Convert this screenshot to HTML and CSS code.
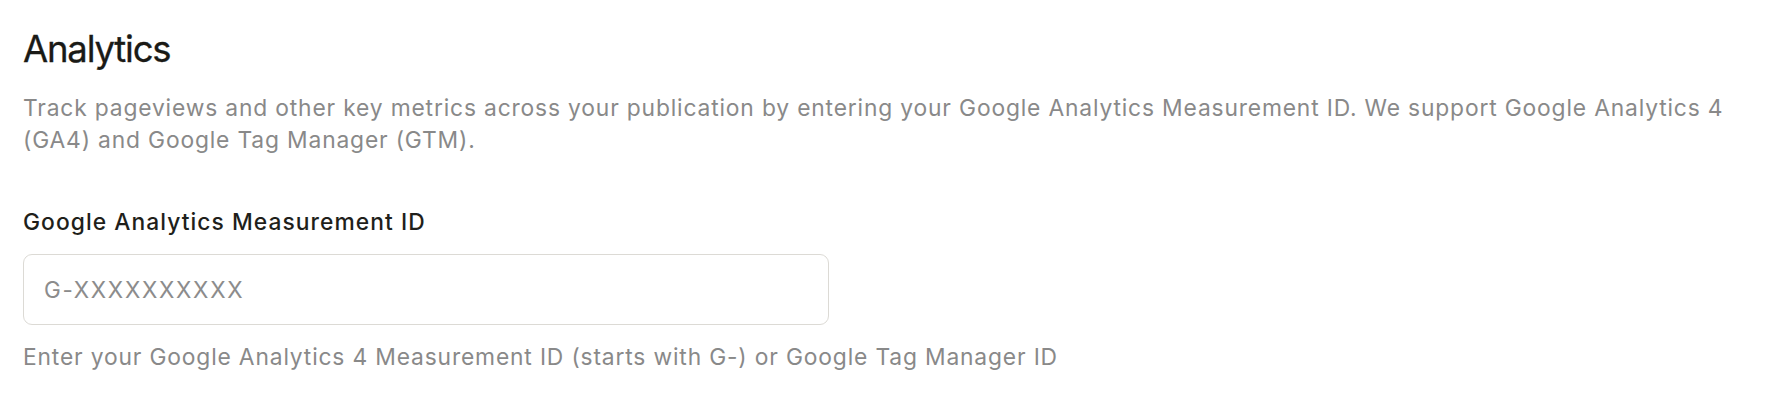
FILE: index.html
```html
<!DOCTYPE html>
<html lang="en">
<head>
<meta charset="utf-8">
<title>Analytics</title>
<link rel="stylesheet" href="styles.css">
</head>
<body>
<section class="settings">
  <h1 class="settings-title">Analytics</h1>
  <p class="settings-desc">Track pageviews and other key metrics across your publication by entering your Google Analytics Measurement ID. We support Google Analytics 4 (GA4) and Google Tag Manager (GTM).</p>
  <div class="field">
    <label class="field-label" for="ga-id">Google Analytics Measurement ID</label>
    <input class="field-input" id="ga-id" type="text" placeholder="G-XXXXXXXXXX">
    <p class="field-help">Enter your Google Analytics 4 Measurement ID (starts with G-) or Google Tag Manager ID</p>
  </div>
</section>
</body>
</html>
```

FILE: styles.css
```css
html, body {
  margin: 0;
  padding: 0;
  background: #ffffff;
}

body {
  font-family: Inter, "Liberation Sans", sans-serif;
  -webkit-font-smoothing: antialiased;
}

.settings {
  padding: 27px 23px 0 23px;
}

.settings-title {
  margin: 0;
  font-size: 36.5px;
  line-height: 44px;
  font-weight: 400;
  color: #1a1a16;
  letter-spacing: -1.2px;
  -webkit-text-stroke: 0.3px #1a1a16;
}

.settings-desc {
  margin: 20.5px 0 0 0;
  font-size: 22.8px;
  line-height: 32.5px;
  font-weight: 400;
  color: #898989;
  letter-spacing: 0.84px;
}

.field {
  display: flex;
  flex-direction: column;
  align-items: flex-start;
  margin-top: 51px;
}

.field-label {
  font-size: 22.8px;
  line-height: 28px;
  font-weight: 500;
  color: #1f1f1b;
  letter-spacing: 1.05px;
}

.field-input {
  box-sizing: border-box;
  margin-top: 18.5px;
  width: 806px;
  height: 71px;
  padding: 0 20px;
  border: 1px solid #dcdad5;
  border-radius: 9px;
  background: #ffffff;
  font-family: inherit;
  font-size: 22.5px;
  letter-spacing: 1.7px;
  color: #1f1f1b;
  outline: none;
}

.field-input::placeholder {
  color: #8c8c8c;
  opacity: 1;
}

.field-help {
  margin: 15.5px 0 0 0;
  font-size: 22.8px;
  line-height: 32.5px;
  color: #898989;
  letter-spacing: 0.84px;
}
```
